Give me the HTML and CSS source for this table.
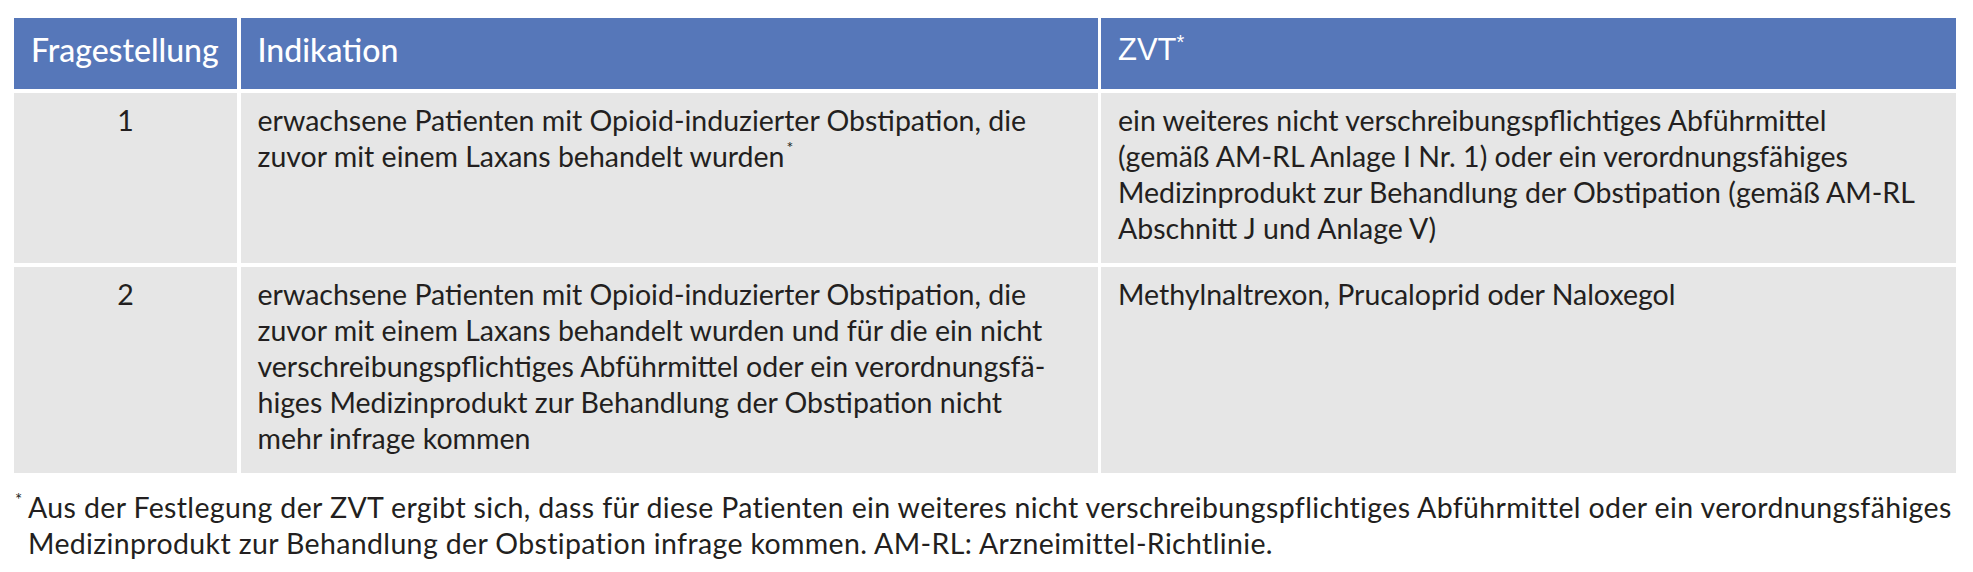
FILE: index.html
```html
<!DOCTYPE html>
<html lang="de">
<head>
<meta charset="utf-8">
<title>ZVT</title>
<link rel="stylesheet" href="styles.css">
</head>
<body>
<div class="wrap">
  <div class="grid">
    <div class="hcell">Fragestellung</div>
    <div class="hcell">Indikation</div>
    <div class="hcell zvt">ZVT<sup class="hstar">*</sup></div>

    <div class="cell num">1</div>
    <div class="cell">erwachsene Patienten mit Opioid-induzierter Obstipation, die<br>zuvor mit einem Laxans behandelt wurden<sup class="star">*</sup></div>
    <div class="cell">ein weiteres nicht verschreibungspflichtiges Abführmittel<br>(gemäß AM-RL Anlage I Nr. 1) oder ein verordnungsfähiges<br>Medizinprodukt zur Behandlung der Obstipation (gemäß AM-RL<br>Abschnitt J und Anlage V)</div>

    <div class="cell num">2</div>
    <div class="cell">erwachsene Patienten mit Opioid-induzierter Obstipation, die<br>zuvor mit einem Laxans behandelt wurden und für die ein nicht<br>verschreibungspflichtiges Abführmittel oder ein verordnungsfä-<br>higes Medizinprodukt zur Behandlung der Obstipation nicht<br>mehr infrage kommen</div>
    <div class="cell">Methylnaltrexon, Prucaloprid oder Naloxegol</div>
  </div>
  <p class="note"><sup class="nstar">*</sup>Aus der Festlegung der ZVT ergibt sich, dass für diese Patienten ein weiteres nicht verschreibungspflichtiges Abführmittel oder ein verordnungsfähiges<br>Medizinprodukt zur Behandlung der Obstipation infrage kommen. AM-RL: Arzneimittel-Richtlinie.</p>
</div>
</body>
</html>
```

FILE: styles.css
```css
html, body {
  margin: 0;
  padding: 0;
  background: #ffffff;
}

body {
  font-family: "Lato", "Liberation Sans", sans-serif;
  color: #231f20;
}

.wrap {
  padding: 18px 17px 0 14px;
}

.grid {
  display: grid;
  grid-template-columns: 223px 857px 1fr;
  column-gap: 3.5px;
  row-gap: 4px;
}

.hcell {
  background: #5677b9;
  color: #ffffff;
  font-size: 32px;
  font-weight: 500;
  line-height: 36px;
  padding: 14px 16px 21px 17px;
  height: 71px;
  box-sizing: border-box;
  white-space: nowrap;
}

.zvt {
  font-family: "Liberation Sans", "Lato", sans-serif;
  font-weight: 400;
  font-size: 31px;
}

.hstar {
  font-size: 20px;
  line-height: 0;
  vertical-align: 11px;
}

.cell {
  background: #e6e6e6;
  font-size: 28.5px;
  line-height: 36px;
  padding: 9px 17px 17px 17px;
  white-space: nowrap;
}

.num {
  text-align: center;
}

.star {
  font-size: 16px;
  line-height: 0;
  vertical-align: 14px;
  margin-left: 2px;
}

.note {
  margin: 16px 0 0 0;
  padding-left: 14px;
  font-size: 28.5px;
  letter-spacing: 0.36px;
  line-height: 36px;
  text-indent: -13px;
  white-space: nowrap;
}

.nstar {
  font-size: 17px;
  line-height: 0;
  vertical-align: 12px;
  display: inline-block;
  width: 13px;
  text-indent: 0;
  letter-spacing: 0;
}
```
